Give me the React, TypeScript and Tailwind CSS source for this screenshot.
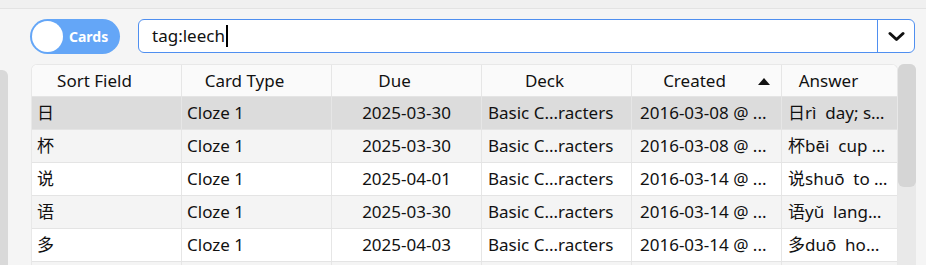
import React from "react";

const rows = [
  { sf: "日", ct: "Cloze 1", due: "2025-03-30", deck: "Basic C...racters", cr: "2016-03-08 @ ...", ans: "日rì  day; s…" },
  { sf: "杯", ct: "Cloze 1", due: "2025-03-30", deck: "Basic C...racters", cr: "2016-03-08 @ ...", ans: "杯bēi  cup …" },
  { sf: "说", ct: "Cloze 1", due: "2025-04-01", deck: "Basic C...racters", cr: "2016-03-14 @ ...", ans: "说shuō  to …" },
  { sf: "语", ct: "Cloze 1", due: "2025-03-30", deck: "Basic C...racters", cr: "2016-03-14 @ ...", ans: "语yǔ  lang…" },
  { sf: "多", ct: "Cloze 1", due: "2025-04-03", deck: "Basic C...racters", cr: "2016-03-14 @ ...", ans: "多duō  ho…" },
  { sf: "", ct: "", due: "", deck: "", cr: "", ans: "" },
];

const font = { fontFamily: '"Noto Sans", "Noto Sans CJK SC", sans-serif' };

export default function App() {
  return (
    <div className="w-[926px] h-[265px] overflow-hidden bg-[#f5f5f5] text-[#111]" style={font}>
      <div className="h-[9px] bg-[#f0f0f0] border-b border-[#e3e3e3]" />
      <div className="flex h-[256px]">
        <div className="w-[8px] shrink-0 flex flex-col pt-[61px]">
          <div className="flex-1 bg-[#d9d9d9] rounded-tr-[6px]" />
        </div>
        <div className="flex-1 flex flex-col pl-[22px] pt-[10px]">
          <div className="flex items-start h-[35px]">
            <div className="w-[90px] h-[35px] rounded-full bg-[#64a6f7] flex items-center pl-[2px]">
              <div className="w-[31px] h-[31px] rounded-full bg-white" />
              <span className="ml-[6px] text-white font-bold text-[14px]">Cards</span>
            </div>
            <div className="ml-[18px] w-[777px] h-[34px] flex border border-[#4f8ff0] rounded-[6px] bg-white overflow-hidden">
              <div className="flex-1 flex items-center pl-[13px] text-[17px] text-[#111]">
                tag:leech<span className="inline-block w-[2px] h-[22px] bg-black ml-[1px]" />
              </div>
              <div className="w-[37px] border-l border-[#4f8ff0] flex items-center justify-center">
                <svg width="17" height="11" viewBox="0 0 17 11" fill="none">
                  <path d="M2 2.5 L8.5 8.5 L15 2.5" stroke="#111" strokeWidth="3" strokeLinecap="round" strokeLinejoin="round" />
                </svg>
              </div>
            </div>
          </div>
          <div className="flex mt-[10px] flex-1 min-h-0">
            <div className="w-[867px] ml-[1px] rounded-t-[6px] overflow-hidden border-t border-l border-r border-[#e8e8e8] bg-white">
              <div className="grid grid-cols-[150px_150px_150px_150px_150px_117px] h-[32px] bg-[#fafafa] border-b border-[#e4e4e4] text-[17px]">
                {["Sort Field", "Card Type", "Due", "Deck", "Created", "Answer"].map((h, i) => (
                  <div key={h} className={`relative flex items-center justify-center pr-[24px] ${i < 5 ? "border-r border-[#e6e6e6]" : ""}`}>
                    {h}
                    {h === "Created" && (
                      <svg className="absolute right-[11px] top-[13px]" width="12" height="7" viewBox="0 0 12 7">
                        <path d="M0 7 L6 0 L12 7 Z" fill="#111" />
                      </svg>
                    )}
                  </div>
                ))}
              </div>
              {rows.map((r, idx) => (
                <div
                  key={idx}
                  className={`grid grid-cols-[150px_150px_150px_150px_150px_117px] h-[33px] border-b border-[#e4e4e4] text-[17px] ${idx === 0 ? "bg-[#dcdcdc]" : idx % 2 === 1 ? "bg-[#f4f4f4]" : "bg-white"}`}
                >
                  <div className="flex items-center pl-[5px] border-r border-[#e6e6e6] whitespace-nowrap overflow-hidden">{r.sf}</div>
                  <div className="flex items-center pl-[5px] border-r border-[#e6e6e6] whitespace-nowrap overflow-hidden">{r.ct}</div>
                  <div className="flex items-center justify-center border-r border-[#e6e6e6] whitespace-nowrap overflow-hidden">{r.due}</div>
                  <div className="flex items-center pl-[6px] border-r border-[#e6e6e6] whitespace-nowrap overflow-hidden">{r.deck}</div>
                  <div className="flex items-center pl-[8px] border-r border-[#e6e6e6] whitespace-nowrap overflow-hidden">{r.cr}</div>
                  <div className="flex items-center pl-[6px] whitespace-pre overflow-hidden">{r.ans}</div>
                </div>
              ))}
            </div>
            <div className="w-[18px] bg-[#e9e9e9] rounded-t-[6px] flex flex-col">
              <div className="h-[123px] bg-[#d5d5d5] rounded-[6px]" />
            </div>
          </div>
        </div>
      </div>
    </div>
  );
}
